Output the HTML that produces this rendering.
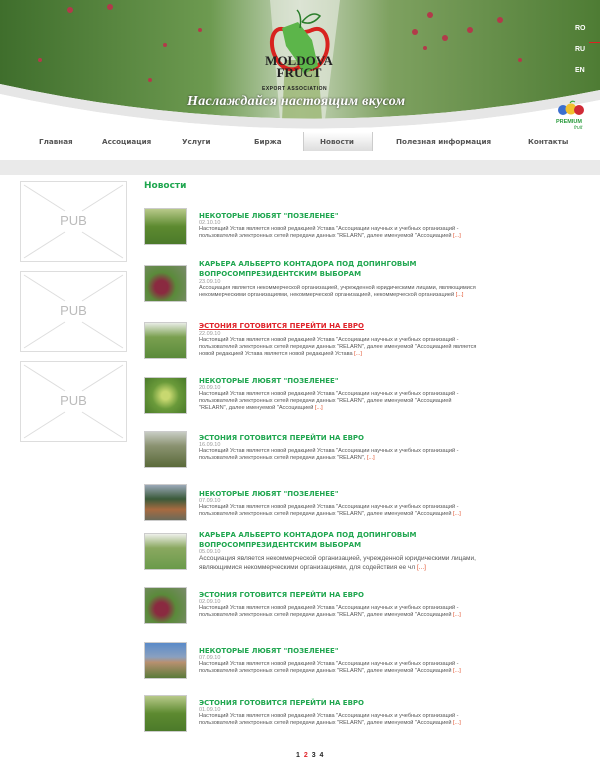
<!DOCTYPE html>
<html><head><meta charset="utf-8"><style>
*{margin:0;padding:0;box-sizing:border-box}
body{width:600px;height:775px;background:#fff;position:relative;overflow:hidden;font-family:"Liberation Sans","DejaVu Sans",sans-serif}
.a{position:absolute}
.nav{position:absolute;top:137px;font-size:7.2px;color:#555;font-weight:bold;font-family:"DejaVu Sans",sans-serif}
.th{position:absolute;left:144px;width:43px;height:37px;border:1px solid #ccc}
.t{position:absolute;left:199px;font-family:"DejaVu Sans",sans-serif;font-weight:bold;color:#1fa64f;font-size:7px;line-height:14px;white-space:nowrap}
.t2{line-height:10px}
.d{position:absolute;left:199px;font-size:5.5px;color:#999;font-family:"Liberation Sans",sans-serif}
.b{position:absolute;left:199px;width:280px;font-size:5.6px;line-height:7.2px;color:#555;font-family:"Liberation Sans",sans-serif}
.b i{font-style:normal;color:#e2502b}
</style></head><body>
<svg class="a" style="left:0;top:0" width="600" height="135">
<defs>
<linearGradient id="c" x1="0" x2="1"><stop offset="0" stop-color="#3f6e2c"/><stop offset=".35" stop-color="#6d9a50"/><stop offset=".5" stop-color="#c7d6bb"/><stop offset=".65" stop-color="#7ea160"/><stop offset="1" stop-color="#4e7c34"/></linearGradient>
</defs>
<path d="M0,0H600V90Q300,150 0,84Z" fill="url(#c)"/>
<path d="M270,0H340L325,120H280Z" fill="#e9ede4" opacity=".6"/>
<path d="M285,60H318L322,120H282Z" fill="#8fae62" opacity=".7"/>
<g fill="#b23a4a"><circle cx="70" cy="10" r="3"/><circle cx="110" cy="7" r="3"/><circle cx="165" cy="45" r="2"/><circle cx="415" cy="32" r="3"/><circle cx="430" cy="15" r="3"/><circle cx="445" cy="38" r="3"/><circle cx="470" cy="30" r="3"/><circle cx="425" cy="48" r="2"/><circle cx="500" cy="20" r="3"/><circle cx="520" cy="60" r="2"/><circle cx="200" cy="30" r="2"/><circle cx="150" cy="80" r="2"/><circle cx="40" cy="60" r="2"/></g>
<path d="M0,84Q300,150 600,90V100Q300,160 0,94Z" fill="#e6e6e6"/>
<path d="M0,94Q300,160 600,100V135H0Z" fill="#fff"/>
<path d="M286,30C272,24 268,44 276,58C282,70 294,72 300,66C306,72 318,70 324,58C332,44 326,24 312,30C306,33 296,33 286,30Z" fill="none" stroke="#d8231f" stroke-width="4"/>
<path d="M282,28L298,22L312,40L318,66L304,74L296,60L286,46Z" fill="#5cb54a"/>
<path d="M300,28Q302,15 297,10M302,22Q312,10 320,16Q312,26 302,22" fill="none" stroke="#2a7d2a" stroke-width="1.5"/>
</svg>
<div class="a" style="left:258px;top:55px;font-family:'Liberation Serif',serif;font-weight:bold;font-size:13px;line-height:12px;color:#222;text-align:center;width:82px">MOLDOVA<br>FRUCT</div>
<div class="a" style="left:262px;top:86px;font-size:5px;font-weight:bold;color:#222;letter-spacing:.5px">EXPORT ASSOCIATION</div>
<div class="a" style="left:187px;top:94px;font-family:'Liberation Serif',serif;font-style:italic;font-weight:bold;font-size:14px;color:#fff;text-shadow:0 0 2px #333;letter-spacing:.3px">Наслаждайся настоящим вкусом</div>
<div class="a" style="left:575px;top:18px;font-size:7px;color:#fff;line-height:21px;font-weight:bold">RO<br>RU<br>EN</div>
<div class="a" style="left:589px;top:42px;width:11px;height:1px;background:#d22"></div>
<svg class="a" style="left:556px;top:100px" width="30" height="20"><circle cx="7" cy="10" r="5" fill="#3b6fd0"/><circle cx="15" cy="9" r="5.5" fill="#f2c12e"/><circle cx="23" cy="10" r="5" fill="#d02a36"/><path d="M14,3Q16,0 19,2" stroke="#3a3" fill="none"/></svg>
<div class="a" style="left:556px;top:119px;font-size:5.5px;font-weight:bold;color:#2a9b3c">PREMIUM</div>
<div class="a" style="left:574px;top:125px;font-size:5px;font-style:italic;color:#2a9b3c">fruit</div>
<div class="a" style="left:303px;top:132px;width:70px;height:19px;background:linear-gradient(#fff,#ddd);border-left:1px solid #ccc;border-right:1px solid #ccc"></div>
<div class="nav" style="left:39px">Главная</div>
<div class="nav" style="left:102px">Ассоциация</div>
<div class="nav" style="left:182px">Услуги</div>
<div class="nav" style="left:254px">Биржа</div>
<div class="nav" style="left:320px">Новости</div>
<div class="nav" style="left:396px">Полезная информация</div>
<div class="nav" style="left:528px">Контакты</div>
<div class="a" style="left:0;top:160px;width:600px;height:15px;background:#eaeaea"></div>
<svg class="a" style="left:20px;top:181px" width="107" height="262" stroke="#ddd" fill="none">
<g><rect x=".5" y=".5" width="106" height="80"/><path d="M4,4L45,30M103,4L62,30M4,77L45,51M103,77L62,51"/></g>
<g transform="translate(0,90)"><rect x=".5" y=".5" width="106" height="80"/><path d="M4,4L45,30M103,4L62,30M4,77L45,51M103,77L62,51"/></g>
<g transform="translate(0,180)"><rect x=".5" y=".5" width="106" height="80"/><path d="M4,4L45,30M103,4L62,30M4,77L45,51M103,77L62,51"/></g>
</svg>
<div class="a" style="left:20px;top:213px;width:107px;text-align:center;color:#bbb;font-size:13px">PUB</div>
<div class="a" style="left:20px;top:303px;width:107px;text-align:center;color:#bbb;font-size:13px">PUB</div>
<div class="a" style="left:20px;top:393px;width:107px;text-align:center;color:#bbb;font-size:13px">PUB</div>
<div class="a" style="left:144px;top:181px;font-family:'DejaVu Sans',sans-serif;font-weight:bold;font-size:9px;color:#1fa64f">Новости</div>

<div class="th" style="top:208px;background:linear-gradient(#b8c98a,#5d8a30 50%,#4c7a2a)"></div>
<div class="t" style="top:209px">НЕКОТОРЫЕ ЛЮБЯТ "ПОЗЕЛЕНЕЕ"</div>
<div class="d" style="top:220px">02.10.10</div>
<div class="b" style="top:226px">Настоящий Устав является новой редакцией Устава "Ассоциации научных и учебных организаций - пользователей электронных сетей передачи данных "RELARN", далее именуемой "Ассоциацией <i>[...]</i></div>

<div class="th" style="top:265px;background:radial-gradient(circle at 40% 60%,#8a2a40 20%,#5a8a3a 45%,#7a8a6a)"></div>
<div class="t t2" style="top:259px">КАРЬЕРА АЛЬБЕРТО КОНТАДОРА ПОД ДОПИНГОВЫМ<br>ВОПРОСОМПРЕЗИДЕНТСКИМ ВЫБОРАМ</div>
<div class="d" style="top:279px">23.09.10</div>
<div class="b" style="top:285px">Ассоциация является некоммерческой организацией, учрежденной юридическими лицами, являющимися некоммерческими организациями, некоммерческой организацией, некоммерческой организацией <i>[...]</i></div>

<div class="th" style="top:322px;background:linear-gradient(#e8ece4,#7aa050 40%,#5a8a3a)"></div>
<div class="t" style="top:319px;color:#e0242b;text-decoration:underline">ЭСТОНИЯ ГОТОВИТСЯ ПЕРЕЙТИ НА ЕВРО</div>
<div class="d" style="top:331px">22.09.10</div>
<div class="b" style="top:337px">Настоящий Устав является новой редакцией Устава "Ассоциации научных и учебных организаций - пользователей электронных сетей передачи данных "RELARN", далее именуемой "Ассоциацией является новой редакцией Устава является новой редакцией Устава <i>[...]</i></div>

<div class="th" style="top:377px;background:radial-gradient(circle at 50% 50%,#c8d870 15%,#6a9a3a 50%,#4a7a2a)"></div>
<div class="t" style="top:374px">НЕКОТОРЫЕ ЛЮБЯТ "ПОЗЕЛЕНЕЕ"</div>
<div class="d" style="top:385px">20.09.10</div>
<div class="b" style="top:391px">Настоящий Устав является новой редакцией Устава "Ассоциации научных и учебных организаций - пользователей электронных сетей передачи данных "RELARN", далее именуемой "Ассоциацией "RELARN", далее именуемой "Ассоциацией <i>[...]</i></div>

<div class="th" style="top:431px;background:linear-gradient(#c8ccc4,#8a9270 40%,#5a6a3a)"></div>
<div class="t" style="top:431px">ЭСТОНИЯ ГОТОВИТСЯ ПЕРЕЙТИ НА ЕВРО</div>
<div class="d" style="top:442px">16.09.10</div>
<div class="b" style="top:448px">Настоящий Устав является новой редакцией Устава "Ассоциации научных и учебных организаций - пользователей электронных сетей передачи данных "RELARN", <i>[...]</i></div>

<div class="th" style="top:484px;background:linear-gradient(#9aa8b8,#3a5a3a 40%,#a86a40 70%,#6a6a5a)"></div>
<div class="t" style="top:487px">НЕКОТОРЫЕ ЛЮБЯТ "ПОЗЕЛЕНЕЕ"</div>
<div class="d" style="top:498px">07.09.10</div>
<div class="b" style="top:504px">Настоящий Устав является новой редакцией Устава "Ассоциации научных и учебных организаций - пользователей электронных сетей передачи данных "RELARN", далее именуемой "Ассоциацией <i>[...]</i></div>

<div class="th" style="top:533px;background:linear-gradient(#eef0ea,#8aa860 40%,#6a9a4a)"></div>
<div class="t t2" style="top:530px">КАРЬЕРА АЛЬБЕРТО КОНТАДОРА ПОД ДОПИНГОВЫМ<br>ВОПРОСОМПРЕЗИДЕНТСКИМ ВЫБОРАМ</div>
<div class="d" style="top:549px">05.09.10</div>
<div class="b" style="top:555px;font-size:6.5px;line-height:8.5px;width:282px">Ассоциация является некоммерческой организацией, учрежденной юридическими лицами, являющимися некоммерческими организациями, для содействия ее чл <i>[...]</i></div>

<div class="th" style="top:587px;background:radial-gradient(circle at 40% 60%,#8a2a40 20%,#5a8a3a 45%,#7a8a6a)"></div>
<div class="t" style="top:588px">ЭСТОНИЯ ГОТОВИТСЯ ПЕРЕЙТИ НА ЕВРО</div>
<div class="d" style="top:599px">02.09.10</div>
<div class="b" style="top:605px">Настоящий Устав является новой редакцией Устава "Ассоциации научных и учебных организаций - пользователей электронных сетей передачи данных "RELARN", далее именуемой "Ассоциацией <i>[...]</i></div>

<div class="th" style="top:642px;background:linear-gradient(#5a8ac8,#8aa0c0 40%,#b89070 55%,#5a7a3a)"></div>
<div class="t" style="top:644px">НЕКОТОРЫЕ ЛЮБЯТ "ПОЗЕЛЕНЕЕ"</div>
<div class="d" style="top:655px">07.09.10</div>
<div class="b" style="top:661px">Настоящий Устав является новой редакцией Устава "Ассоциации научных и учебных организаций - пользователей электронных сетей передачи данных "RELARN", далее именуемой "Ассоциацией <i>[...]</i></div>

<div class="th" style="top:695px;background:linear-gradient(#b8c98a,#5d8a30 50%,#4c7a2a)"></div>
<div class="t" style="top:696px">ЭСТОНИЯ ГОТОВИТСЯ ПЕРЕЙТИ НА ЕВРО</div>
<div class="d" style="top:707px">01.09.10</div>
<div class="b" style="top:713px">Настоящий Устав является новой редакцией Устава "Ассоциации научных и учебных организаций - пользователей электронных сетей передачи данных "RELARN", далее именуемой "Ассоциацией <i>[...]</i></div>

<div class="a" style="left:296px;top:752px;font-size:7px;font-weight:bold;color:#222;word-spacing:2px">1 <span style="color:#e0242b">2</span> 3 4</div>
</body></html>
